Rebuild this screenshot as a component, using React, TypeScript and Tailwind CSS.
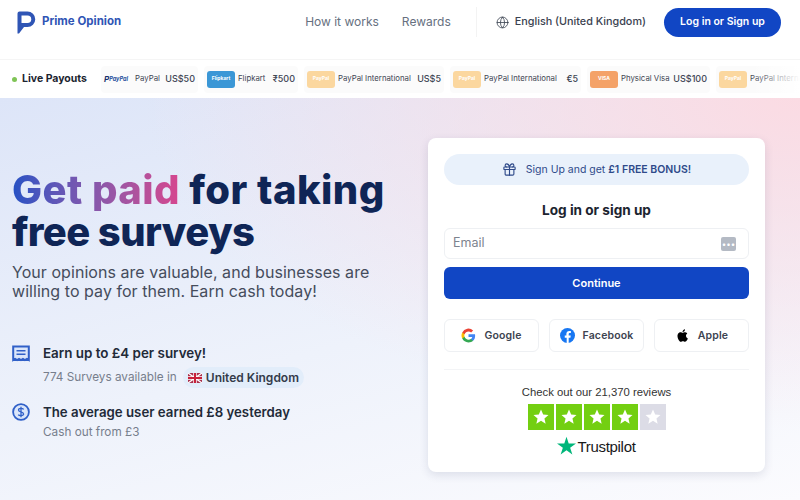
import React from "react";
import { Gift, Globe } from "lucide-react";

const font = "font-['Inter','Liberation_Sans',sans-serif]";

const Logo = () => (
  <svg width="20" height="23" viewBox="0 0 20 23" fill="none">
    <path d="M0.500 2.500A2 2 0 0 1 2.500 0.500H10.500A7.700 7.700 0 0 1 10.500 16H7L2 22.500H0.500Z" fill="#2f55b5" />
    <path d="M4.500 4.500H10.500A3.700 3.700 0 0 1 10.500 12H4.500Z" fill="#fff" />
  </svg>
);

const Tile = ({ bg, label }: { bg: string; label: string }) => (
  <span className={`flex h-[17px] w-[28px] shrink-0 items-center justify-center rounded-[3px] text-[5px] font-bold text-white ${bg}`}>
    {label}
  </span>
);

const Payout = ({ tile, name, amount, w }: { tile: React.ReactNode; name: string; amount: string; w: string }) => (
  <div className={`flex h-[27px] shrink-0 items-center gap-[3px] rounded bg-[#fbfbfb] px-[3px] ${w}`}>
    {tile}
    <span className="flex-1 whitespace-nowrap text-[7.8px] text-[#3f4654]">{name}</span>
    <span className="text-[9px] font-medium text-[#3f4654]">{amount}</span>
  </div>
);

const orange = <Tile bg="bg-[#fbd79f]" label="PayPal" />;

const Social = ({ icon, label }: { icon: React.ReactNode; label: string }) => (
  <button className="flex h-[33px] flex-1 items-center justify-center gap-2 rounded-md border border-[#eef0f3] bg-white text-[10.5px] font-semibold tracking-[0.15px] text-[#3c4350]">
    {icon}
    {label}
  </button>
);

const Star = ({ off }: { off?: boolean }) => (
  <span className={`flex h-[26px] w-[26px] items-center justify-center ${off ? "bg-[#dcdce6]" : "bg-[#73cf11]"}`}>
    <svg width="18" height="18" viewBox="0 0 24 24" fill="#fff">
      <path d="M12 2l2.900 6.600 7.100.7-5.400 4.700 1.600 7L12 17l-6.200 3.900 1.600-7L2 9.300l7.100-.7z" />
    </svg>
  </span>
);

export default function App() {
  return (
    <div className={`flex h-[500px] w-[800px] flex-col overflow-hidden bg-white ${font}`}>
      <header className="flex h-[59px] shrink-0 items-center pb-[15px] pl-[17px] pr-[19px]">
        <Logo />
        <span className="ml-[5px] text-[11.5px] font-bold text-[#2f55b5]">Prime Opinion</span>
        <nav className="ml-[184px] flex items-center gap-[23px] text-[12px] text-[#667080]">
          <span>How it works</span>
          <span>Rewards</span>
        </nav>
        <div className="ml-[25px] h-[30px] w-px bg-[#f3f3f3]" />
        <Globe className="ml-[19px] h-[13px] w-[13px] text-[#3a4250]" strokeWidth={1.5} />
        <span className="ml-[6px] text-[10.8px] font-medium text-[#3a4250]">English (United Kingdom)</span>
        <button className="ml-auto h-[29px] w-[117px] rounded-full bg-[#1146c4] text-[10.5px] font-semibold text-white">
          Log in or Sign up
        </button>
      </header>

      <div className="relative flex h-[39px] shrink-0 items-center border-t border-[#f5f5f5] pl-[12px]">
        <span className="h-[5px] w-[5px] shrink-0 rounded-full bg-[#7fc456]" />
        <span className="ml-[5px] w-[79px] shrink-0 text-[10.5px] font-bold text-[#1c2430]">Live Payouts</span>
        <div className="flex gap-[6px]">
          <Payout
            w="w-[97px]"
            name="PayPal"
            amount="US$50"
            tile={
              <span className="flex w-[28px] shrink-0 items-center text-[5.500px] font-bold italic text-[#1d4f9c]">
                <span className="text-[8px] text-[#152f6b]">P</span>PayPal
              </span>
            }
          />
          <Payout w="w-[94px]" name="Flipkart" amount="₹500" tile={<Tile bg="bg-[#3b97d6]" label="Flipkart" />} />
          <Payout w="w-[140px]" name="PayPal International" amount="US$5" tile={orange} />
          <Payout w="w-[131px]" name="PayPal International" amount="€5" tile={orange} />
          <Payout w="w-[123px]" name="Physical Visa" amount="US$100" tile={<Tile bg="bg-[#f4a268]" label="VISA" />} />
          <Payout w="w-[122px]" name="PayPal International" amount="" tile={orange} />
        </div>
        <div className="absolute right-0 top-0 h-full w-[50px] bg-gradient-to-l from-white to-transparent" />
      </div>

      <main className="flex flex-1 justify-between bg-[radial-gradient(ellipse_at_100%_0%,#fbdbe3_0%,rgba(251,219,227,0)_58%),linear-gradient(165deg,#dde5f8_0%,#eef2fb_55%,#fbfbfe_100%)] pl-[12px] pr-[35px] pt-[40px]">
        <section className="w-[390px]">
          <h1 className="mt-[31px] text-[40px] font-extrabold leading-[42px] text-[#0f2556]">
            <div className="tracking-[0.45px]">
              <span className="inline-block bg-gradient-to-r from-[#2351c4] to-[#d6458e] bg-clip-text text-transparent">Get paid</span>{" "}
              for taking
            </div>
            <div className="tracking-[-0.6px]">free surveys</div>
          </h1>
          <p className="mt-[10px] text-[16px] leading-[19px] tracking-[0.05px] text-[#454c5c]">
            Your opinions are valuable, and businesses are willing to pay for them. Earn cash today!
          </p>

          <div className="mt-[43px] flex gap-[13px]">
            <svg className="mt-[1px] shrink-0" width="18" height="18" viewBox="0 0 18 18" fill="none" stroke="#3060c8" strokeWidth="2">
              <path d="M1.200 1.500h15.600v13.500l-1.950-1.200-1.950 1.200-1.950-1.200L9 15l-1.950-1.200L5.100 15l-1.950-1.200L1.200 15z" fill="#dbe6fa" />
              <path d="M4.500 5.800h9M4.500 9.300h9" strokeWidth="1.600" />
            </svg>
            <div>
              <div className="text-[13.4px] font-semibold leading-[18px] text-[#222a38]">Earn up to £4 per survey!</div>
              <div className="mt-[5px] flex items-center text-[11.75px] text-[#777e8c]">
                774 Surveys available in
                <span className="ml-[6px] flex h-[21px] items-center gap-[4px] rounded-full bg-[#e2edfa] px-[5px] text-[12px] font-semibold text-[#333b4a]">
                  <svg width="14" height="10" viewBox="0 0 14 10">
                    <rect width="14" height="10" fill="#a9304c" />
                    <path d="M0 0l14 10M14 0L0 10" stroke="#fff" strokeWidth="1.400" />
                    <path d="M7 0v10M0 5h14" stroke="#fff" strokeWidth="3.400" />
                    <path d="M7 0v10M0 5h14" stroke="#c8203a" strokeWidth="2" />
                  </svg>
                  United Kingdom
                </span>
              </div>
            </div>
          </div>

          <div className="mt-[15px] flex gap-[13px]">
            <svg className="shrink-0" width="18" height="18" viewBox="0 0 18 18" fill="none" stroke="#3060c8" strokeWidth="1.800">
              <circle cx="9" cy="9" r="7.900" fill="#dbe6fa" />
              <path d="M11.600 6.500C11 5.200 6.600 4.900 6.500 7c-.1 2.300 5.200 1.600 5.100 4-.1 2.100-4.600 1.900-5.300.6M9 3.800v10.400" strokeWidth="1.300" />
            </svg>
            <div>
              <div className="text-[13.25px] font-semibold leading-[18px] text-[#222a38]">The average user earned £8 yesterday</div>
              <div className="mt-[3px] text-[11.75px] text-[#777e8c]">Cash out from £3</div>
            </div>
          </div>
        </section>

        <section className="h-[334px] w-[337px] rounded-lg bg-white p-[16px] shadow-[0_3px_10px_rgba(30,40,80,0.12)]">
          <div className="flex h-[31px] items-center justify-center gap-[9px] rounded-full bg-[#e9f1fb] text-[10.5px] text-[#2f4a8a]">
            <Gift className="h-[15px] w-[15px]" strokeWidth={1.8} />
            <span>
              Sign Up and get <span className="font-semibold">£1 FREE BONUS!</span>
            </span>
          </div>
          <h2 className="mt-[15px] text-center text-[13.6px] font-bold leading-[20px] text-[#1c2430]">Log in or sign up</h2>
          <div className="mt-[8px] flex h-[31px] items-center justify-between rounded-md border border-[#eef0f3] pl-[8px] pr-[12px] text-[12.5px] text-[#7d838e]">
            Email
            <span className="flex h-[14px] w-[15px] items-center justify-center rounded-[2px] bg-[#b4bac4] text-[8px] leading-none text-white">
              •••
            </span>
          </div>
          <button className="mt-[8px] h-[32px] w-full rounded-md bg-[#1146c4] text-[11px] font-semibold text-white">Continue</button>

          <div className="mt-[20px] flex gap-[10px]">
            <Social
              label="Google"
              icon={
                <svg width="15" height="15" viewBox="0 0 24 24">
                  <path fill="#4285F4" d="M22.600 12.300c0-.8-.1-1.600-.2-2.300H12v4.400h6a5.100 5.100 0 0 1-2.200 3.300v2.800h3.600c2.100-1.900 3.200-4.800 3.200-8.200z" />
                  <path fill="#34A853" d="M12 23c3 0 5.500-1 7.400-2.700l-3.600-2.800c-1 .7-2.300 1.100-3.800 1.100-2.900 0-5.400-2-6.300-4.600H2v2.900A11 11 0 0 0 12 23z" />
                  <path fill="#FBBC05" d="M5.700 14c-.5-1.300-.5-2.700 0-4V7.100H2a11 11 0 0 0 0 9.800z" />
                  <path fill="#EA4335" d="M12 5.400c1.600 0 3.100.6 4.200 1.700l3.200-3.200A11 11 0 0 0 2 7.100L5.700 10C6.600 7.400 9.100 5.400 12 5.400z" />
                </svg>
              }
            />
            <Social
              label="Facebook"
              icon={
                <svg width="15" height="15" viewBox="0 0 24 24">
                  <circle cx="12" cy="12" r="12" fill="#1877F2" />
                  <path fill="#fff" d="M16.700 15.500l.5-3.500h-3.300V9.800c0-1 .5-1.900 2-1.900h1.500v-3s-1.400-.2-2.700-.2c-2.700 0-4.500 1.700-4.500 4.600V12H7.600v3.500h3.100V24h3.200v-8.500z" />
                </svg>
              }
            />
            <Social
              label="Apple"
              icon={
                <svg width="15" height="15" viewBox="0 0 24 24" fill="#000">
                  <path d="M17.500 12.600c0-2.500 2-3.700 2.100-3.800-1.200-1.700-3-1.900-3.600-2-1.500-.2-3 .9-3.800.9-.8 0-2-.9-3.300-.9-1.700 0-3.300 1-4.100 2.500-1.800 3.100-.5 7.600 1.300 10.100.9 1.200 1.900 2.600 3.200 2.500 1.300-.1 1.800-.8 3.400-.8 1.500 0 2 .8 3.300.8 1.400 0 2.300-1.200 3.100-2.400 1-1.400 1.400-2.800 1.400-2.900-.1 0-3-.9-3-4.500zM15 5.100c.7-.8 1.200-2 1-3.100-1 0-2.200.7-2.900 1.500-.6.700-1.200 1.900-1 3 1.100.1 2.200-.6 2.900-1.400z" />
                </svg>
              }
            />
          </div>

          <div className="mt-[17px] border-t border-[#f3f4f6] pt-[15px] font-['Liberation_Sans',sans-serif]">
            <div className="text-center text-[11.3px] leading-[14px] text-[#333]">Check out our 21,370 reviews</div>
            <div className="mt-[5px] flex justify-center gap-[2px]">
              <Star />
              <Star />
              <Star />
              <Star />
              <Star off />
            </div>
            <div className="mt-[7px] flex items-center justify-center gap-[1px] text-[15px] font-medium leading-[20px] tracking-[-0.3px] text-[#191919]">
              <svg width="19" height="19" viewBox="0 0 24 24" fill="#00b67a" className="-mt-[3px]">
                <path d="M12 1l2.800 8.400H24l-7.400 5.300 2.800 8.600L12 18l-7.400 5.300 2.800-8.600L0 9.400h9.200z" />
              </svg>
              Trustpilot
            </div>
          </div>
        </section>
      </main>
    </div>
  );
}
